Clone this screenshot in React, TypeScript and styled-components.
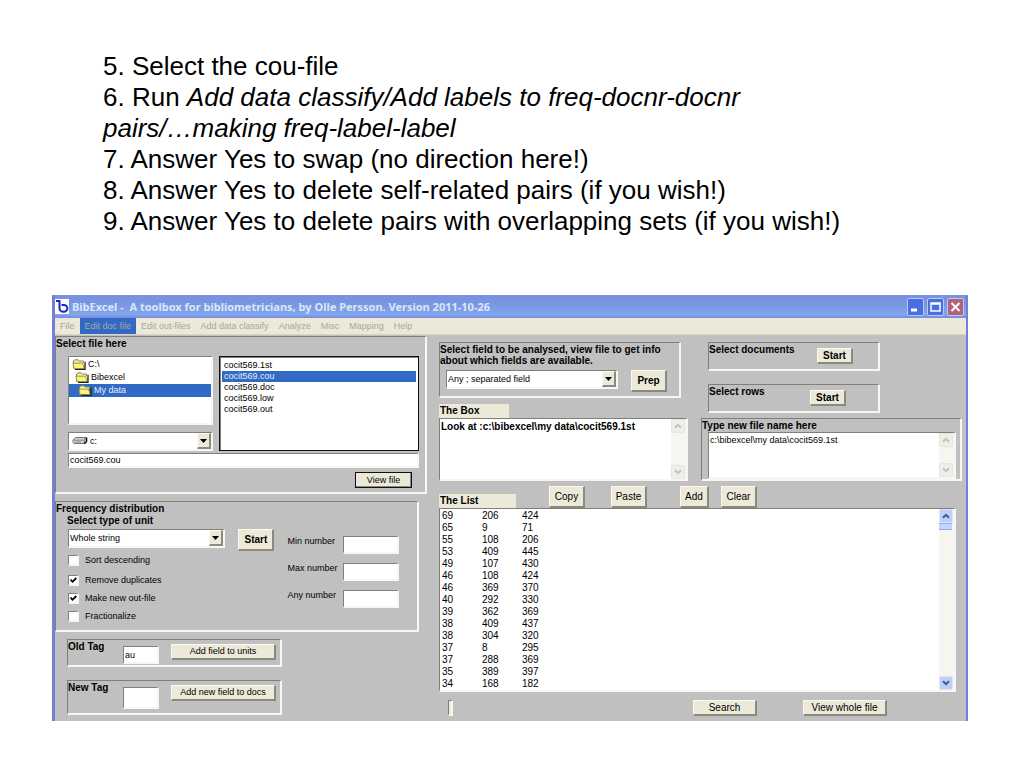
import React from "react";
import styled, { createGlobalStyle, css } from "styled-components";

const Global = createGlobalStyle`
  *, *::before, *::after { box-sizing: border-box; }
  body { margin: 0; background: #fff; color: #000; font-family: "Liberation Sans", Arial, sans-serif; }
  button, input, select, textarea { font: inherit; color: inherit; margin: 0; }
`;

const Slide = styled.main`padding: 51px 56px 47px 52px;`;
const Steps = styled.div`
  padding-left: 51px;
  margin-bottom: 58px;
  font-size: 26px;
  line-height: 31px;
`;
const Step = styled.p`margin: 0;`;

const Window = styled.section`
  border: solid #7480d8;
  border-width: 0 2px 0 3px;
  background: #c0c0c0;
  font-size: 10px;
  line-height: 11px;
`;
const TitleBar = styled.header`
  display: flex;
  align-items: center;
  height: 23px;
  padding: 0 2px 0 0;
  gap: 3px;
  color: #dbe6fb;
  background: linear-gradient(#7a90e0, #7996e0 40%, #82a6ee 85%, #7787dc);
`;
const Title = styled.h1`
  flex: 1;
  margin: 0;
  font: bold 11px/14px "Noto Sans", sans-serif;
  white-space: pre;
`;
const Caption = styled.button<{ $close?: boolean }>`
  display: grid;
  width: 17px;
  height: 18px;
  padding: 0;
  border: 1px solid #b9c9f5;
  border-radius: 2px;
  background: ${p => (p.$close ? "#b5617c" : "#4a6fe0")};
`;
const compact = css`font-size: 9px;`;
const MenuBar = styled.nav`
  ${compact}
  display: flex;
  height: 17px;
  background: #ece9d8;
  border-bottom: 1px solid #d9d6c8;
`;
const MenuItem = styled.button<{ $active?: boolean }>`
  padding: 0 5px;
  border: 0;
  color: #aaa798;
  background: ${p => (p.$active ? "#316ac5" : "transparent")};
`;

const Body = styled.div`
  display: grid;
  grid-template-columns: minmax(0, 372fr) minmax(0, 527fr);
  column-gap: 12px;
`;
const LeftSide = styled.div`padding: 1px 0 6px;`;
const RightSide = styled.div`padding: 7px 0 5px;`;

const sunken = css`
  border: solid;
  border-width: 1px 2px 2px 1px;
  border-color: #817f77 #f6f6f4 #f6f6f4 #817f77;
`;
const raised = css`
  border: solid;
  border-width: 1px 2px 2px 1px;
  border-color: #fbfaf2 #8c8a7c #8c8a7c #fbfaf2;
  background: #ece9d8;
`;
const Panel = styled.fieldset`
  ${sunken}
  min-width: 0;
  margin: 0;
  padding: 1px 0 0;
`;
const Heading = styled.h2`
  margin: 0;
  font-size: 10px;
  line-height: 11px;
  font-weight: bold;
`;
const Button = styled.button<{ $w: number; $tall?: boolean; $bold?: boolean; $focus?: boolean; $compact?: boolean }>`
  ${raised}
  ${p => p.$compact && compact}
  flex: none;
  width: ${p => p.$w}px;
  height: ${p => (p.$tall ? 22 : 16)}px;
  padding: 0;
  white-space: nowrap;
  font-weight: ${p => (p.$bold ? "bold" : "normal")};
  ${p => p.$focus && css`border: 1px solid #111; box-shadow: inset -1px -1px #8c8a7c;`}
`;
const Input = styled.input<{ $h?: number }>`
  ${sunken}
  ${compact}
  width: 100%;
  min-width: 0;
  height: ${p => p.$h ?? 18}px;
  padding: 0 1px;
  background: #fff;
`;

const FilePanel = styled(Panel)`padding-bottom: 4px;`;
const FileGrid = styled.div`
  display: grid;
  grid-template-columns: minmax(0, 145fr) minmax(0, 200fr);
  gap: 2px 6px;
  padding: 7px 6px 0 12px;
`;
const Stack = styled.div<{ $gap?: number }>`
  display: flex;
  flex-direction: column;
  gap: ${p => p.$gap ?? 0}px;
  min-width: 0;
`;
const ListBox = styled.ul<{ $strong?: boolean }>`
  ${sunken}
  ${compact}
  flex: 1;
  min-height: 69px;
  margin: 0;
  padding: ${p => (p.$strong ? "3px 2px" : "1px 0")};
  list-style: none;
  background: #fff;
  ${p => p.$strong && css`border: 1px solid #111; box-shadow: inset 1px 1px #817f77;`}
`;
const Option = styled.li<{ $selected?: boolean; $indent?: number }>`
  display: flex;
  align-items: center;
  gap: 1px;
  height: ${p => (p.$indent === undefined ? 11 : 13)}px;
  padding-left: ${p => p.$indent ?? 2}px;
  color: ${p => (p.$selected ? "#e4ecfa" : "#000")};
  background: ${p => (p.$selected ? "#316ac5" : "transparent")};
`;
const WideCell = styled.div`grid-column: 1 / -1;`;
const FileAction = styled.div`
  display: flex;
  justify-content: flex-end;
  padding: 4px 13px 0 0;
`;

const ComboFrame = styled.div<{ $inset: boolean }>`
  ${sunken}
  ${compact}
  position: relative;
  display: flex;
  align-items: center;
  height: 19px;
  padding-left: ${p => (p.$inset ? 3 : 0)}px;
  background: #fff;
`;
const ComboSelect = styled.select`
  appearance: none;
  flex: 1;
  min-width: 0;
  height: 100%;
  padding: 0 14px 0 1px;
  border: 0;
  background: transparent;
`;
const ComboArrow = styled.span`
  ${raised}
  position: absolute;
  top: 0;
  right: 0;
  bottom: 0;
  width: 14px;
  display: grid;
  place-items: center;
  pointer-events: none;
`;

const FrequencyPanel = styled(Panel)`
  margin: 7px 8px 0 0;
  padding-bottom: 5px;
`;
const FrequencyGrid = styled.div`
  display: grid;
  grid-template-columns: minmax(0, 158fr) 36px minmax(0, 112fr);
  column-gap: 13px;
  padding: 3px 18px 0 12px;
`;
const Subheading = styled(Heading)`padding: 1px 0 0 11px;`;
const Checks = styled.div`
  ${compact}
  display: grid;
  grid-template-rows: 20px 18px 18px 18px;
  padding-top: 3px;
`;
const CheckRow = styled.label`
  display: flex;
  align-items: center;
  gap: 6px;
  height: 18px;
`;
const CheckBox = styled.input`
  ${sunken}
  appearance: none;
  width: 11px;
  height: 11px;
  background: #fff;
`;
const CheckCell = styled.span`
  position: relative;
  display: flex;
`;
const CheckMark = styled.svg`
  position: absolute;
  inset: 1px;
  pointer-events: none;
`;
const Numbers = styled.div`
  ${compact}
  padding-top: 7px;
`;
const NumberRow = styled.label`
  display: grid;
  grid-template-columns: 56px minmax(0, 56px);
  margin-bottom: 9px;
`;

const TagPanel = styled(Panel)<{ $top: number; $h: number }>`
  display: flex;
  align-items: flex-start;
  max-width: 215px;
  min-height: ${p => p.$h}px;
  margin: ${p => p.$top}px 0 0 12px;
`;
const TagLabel = styled.label`
  width: 55px;
  font-weight: bold;
`;
const TagInput = styled.div`
  width: 36px;
  padding-top: 5px;
  margin-right: 12px;
`;
const Lowered = styled.div`padding-top: 3px;`;

const TopArea = styled.div`
  display: grid;
  grid-template-columns: minmax(0, 249fr) minmax(0, 261fr);
  column-gap: 13px;
  padding-right: 4px;
`;
const FieldPanel = styled(Panel)`
  min-height: 56px;
  margin: 0 7px 6px 0;
`;
const FieldRow = styled.div`
  display: grid;
  grid-template-columns: minmax(0, 172px) 36px;
  column-gap: 13px;
  padding: 4px 0 0 6px;
`;
const Tab = styled(Heading)<{ $w: number }>`
  width: ${p => p.$w}px;
  height: 14px;
  padding: 1px 0 0 1px;
  line-height: 12px;
  background: #ece9d8;
`;
const Editor = styled.div<{ $h: number }>`
  ${sunken}
  display: flex;
  height: ${p => p.$h}px;
  background: #fff;
`;
const TextArea = styled.textarea<{ $bold?: boolean }>`
  flex: 1;
  min-width: 0;
  padding: 2px 1px;
  border: 0;
  resize: none;
  background: transparent;
  overflow: hidden;
  font-weight: ${p => (p.$bold ? "bold" : "normal")};
  ${p => !p.$bold && compact}
`;
const SelectPanel = styled(Panel)<{ $gap: number; $end: number }>`
  display: flex;
  align-items: flex-start;
  justify-content: space-between;
  max-width: 172px;
  width: 100%;
  min-height: 29px;
  margin: 0 0 ${p => p.$gap}px 7px;
  padding-right: ${p => p.$end}px;
`;
const SelectAction = styled.div`padding-top: 4px;`;
const NamePanel = styled(Panel)`
  min-height: 63px;
  padding-right: 4px;
`;
const NameEditor = styled.div`padding: 1px 0 0 6px;`;

const Scroll = styled.div`
  display: flex;
  flex-direction: column;
  justify-content: space-between;
  width: 15px;
  background: #f6f5f0;
`;
const ScrollGroup = styled.div`display: block;`;
const ScrollButton = styled.button<{ $on?: boolean }>`
  display: grid;
  place-items: center;
  width: 14px;
  height: 14px;
  padding: 0;
  border: 1px solid ${p => (p.$on ? "#dbe5fc" : "#e6e5de")};
  border-radius: 2px;
  background: ${p => (p.$on ? "#bdd0f8" : "#efeee8")};
`;
const Thumb = styled.div`
  width: 13px;
  height: 7px;
  border: solid #8fb0ee;
  border-width: 1px 0;
  background: #c6d6fb;
`;

const ListTools = styled.div`
  display: flex;
  align-items: flex-end;
  padding-top: 5px;
`;
const ToolSlot = styled.div<{ $before: number }>`
  display: flex;
  margin-left: ${p => p.$before}px;
`;
const ListFrame = styled.div`
  ${sunken}
  display: flex;
  justify-content: space-between;
  margin-right: 10px;
  background: #fff;
`;
const Pairs = styled.table`
  border-collapse: collapse;
  margin-top: 1px;
  line-height: 12px;
  td { width: 40px; padding: 0 0 0 2px; }
`;
const BottomRow = styled.div`
  display: flex;
  justify-content: flex-end;
  gap: 46px;
  padding: 8px 79px 0 9px;
`;
const Progress = styled.div`
  ${sunken}
  width: 5px;
  height: 16px;
  margin-right: auto;
  background: #ece9d8;
`;

const Folder = () => (
  <svg width="15" height="11" viewBox="0 0 15 11" aria-hidden="true">
    <path d="M1.5 9.5V2L3 .8h3L7.4 2h4.1v1.8" fill="#f3ec9a" stroke="#8a8550" />
    <path d="M2.2 9.8 .8 4.2h9.800l1.700 5.600z" fill="#fbf47c" stroke="#8a8440" strokeWidth=".8" />
    <path d="M13 2.8v7.600H3" fill="none" stroke="#222" strokeWidth="1.3" />
  </svg>
);
const Drive = () => (
  <svg width="17" height="10" viewBox="0 0 17 10" aria-hidden="true">
    <path d="M1 4 3.5 1.5H14L12.3 4v3.5H2.2L1 6.5z" fill="#d2d2d2" stroke="#555" strokeWidth=".8" />
    <path d="M12.3 7.7 14.5 5.5v-4" fill="none" stroke="#111" strokeWidth="1.6" />
    <path d="M2 4.2h9.8M3 6h6" stroke="#777" strokeWidth=".8" />
  </svg>
);
const Arrow = () => (
  <svg width="7" height="4" aria-hidden="true"><path d="M0 0h7L3.5 4z" /></svg>
);
const Chevron = ({ down, on }: { down?: boolean; on?: boolean }) => (
  <svg width="8" height="6" viewBox="0 0 8 6" aria-hidden="true">
    <path d={down ? "M1 1.2 4 4.2 7 1.2" : "M1 4.8 4 1.8 7 4.8"} fill="none" stroke={on ? "#41598f" : "#c4c3bb"} strokeWidth="2" />
  </svg>
);

function Combo({ label, value, icon }: { label: string; value: string; icon?: React.ReactNode }) {
  return (
    <ComboFrame $inset={!!icon}>
      {icon}
      <ComboSelect aria-label={label}><option>{value}</option></ComboSelect>
      <ComboArrow><Arrow /></ComboArrow>
    </ComboFrame>
  );
}
function ScrollBar({ on }: { on?: boolean }) {
  return (
    <Scroll>
      <ScrollGroup>
        <ScrollButton $on={on} aria-label="Scroll up"><Chevron on={on} /></ScrollButton>
        {on && <Thumb />}
      </ScrollGroup>
      <ScrollButton $on={on} aria-label="Scroll down"><Chevron down on={on} /></ScrollButton>
    </Scroll>
  );
}
function Check({ text, checked }: { text: string; checked?: boolean }) {
  const [on, setOn] = React.useState(!!checked);
  return (
    <CheckRow>
      <CheckCell>
        <CheckBox type="checkbox" checked={on} onChange={e => setOn(e.target.checked)} />
        {on && <CheckMark width="9" height="9" viewBox="0 0 9 9"><path d="M1.5 3.5 3.5 5.8 7.3 2" fill="none" stroke="#000" strokeWidth="1.8" /></CheckMark>}
      </CheckCell>
      {text}
    </CheckRow>
  );
}

const menus = ["File", "Edit doc file", "Edit out-files", "Add data classify", "Analyze", "Misc", "Mapping", "Help"];
const folders = ["C:\\", "Bibexcel", "My data"];
const files = ["cocit569.1st", "cocit569.cou", "cocit569.doc", "cocit569.low", "cocit569.out"];
const pairs = [
  [69, 206, 424], [65, 9, 71], [55, 108, 206], [53, 409, 445], [49, 107, 430],
  [46, 108, 424], [46, 369, 370], [40, 292, 330], [39, 362, 369], [38, 409, 437],
  [38, 304, 320], [37, 8, 295], [37, 288, 369], [35, 389, 397], [34, 168, 182],
];

export default function App() {
  return (
    <Slide>
      <Global />
      <Steps>
        <Step>5. Select the cou-file</Step>
        <Step>6. Run <em>Add data classify/Add labels to freq-docnr-docnr<br />pairs/…making freq-label-label</em></Step>
        <Step>7. Answer Yes to swap (no direction here!)</Step>
        <Step>8. Answer Yes to delete self-related pairs (if you wish!)</Step>
        <Step>9. Answer Yes to delete pairs with overlapping sets (if you wish!)</Step>
      </Steps>
      <Window>
        <TitleBar>
          <svg width="14" height="15" viewBox="0 0 14 15" aria-hidden="true">
            <path d="M0 0h14v15H0z" fill="#fff" />
            <path d="M1 2h3.5v7.5a3.800 3.200 0 0 0 3.800 3.200h.5a3.600 3.400 0 0 0 0-6.800H6.500" fill="none" stroke="#1828c8" strokeWidth="2" />
          </svg>
          <Title>{"BibExcel -  A toolbox for bibliometricians, by Olle Persson. Version 2011-10-26"}</Title>
          <Caption aria-label="Minimize"><svg width="15" height="16"><path d="M3 11h6" stroke="#fff" strokeWidth="3" /></svg></Caption>
          <Caption aria-label="Maximize"><svg width="15" height="16"><path d="M3 4h9v8H3zM3 5h9" fill="none" stroke="#fff" strokeWidth="1.5" /></svg></Caption>
          <Caption $close aria-label="Close"><svg width="15" height="16"><path d="m3.5 4 8 8m0-8-8 8" stroke="#fff" strokeWidth="2" /></svg></Caption>
        </TitleBar>
        <MenuBar>
          {menus.map((m, i) => <MenuItem key={m} $active={i === 1}>{m}</MenuItem>)}
        </MenuBar>
        <Body>
          <LeftSide>
            <FilePanel>
              <Heading>Select file here</Heading>
              <FileGrid>
                <Stack $gap={7}>
                  <ListBox role="listbox" aria-label="Folders">
                    {folders.map((f, i) => (
                      <Option key={f} role="option" aria-selected={i === 2} $selected={i === 2} $indent={3 + i * 3}><Folder />{f}</Option>
                    ))}
                  </ListBox>
                  <Combo label="Drive" value="c:" icon={<Drive />} />
                </Stack>
                <ListBox $strong role="listbox" aria-label="Files">
                  {files.map((f, i) => (
                    <Option key={f} role="option" aria-selected={i === 1} $selected={i === 1}>{f}</Option>
                  ))}
                </ListBox>
                <WideCell><Input $h={15} aria-label="File name" defaultValue="cocit569.cou" /></WideCell>
              </FileGrid>
              <FileAction><Button $w={57} $focus $compact>View file</Button></FileAction>
            </FilePanel>
            <FrequencyPanel>
              <Heading>Frequency distribution</Heading>
              <Subheading>Select type of unit</Subheading>
              <FrequencyGrid>
                <Stack>
                  <Combo label="Select type of unit" value="Whole string" />
                  <Checks>
                    <Check text="Sort descending" />
                    <Check text="Remove duplicates" checked />
                    <Check text="Make new out-file" checked />
                    <Check text="Fractionalize" />
                  </Checks>
                </Stack>
                <Button $w={36} $tall $bold>Start</Button>
                <Numbers>
                  {["Min number", "Max number", "Any number"].map(n => (
                    <NumberRow key={n}>{n}<Input /></NumberRow>
                  ))}
                </Numbers>
              </FrequencyGrid>
            </FrequencyPanel>
            <TagPanel $top={7} $h={28}>
              <TagLabel htmlFor="old-tag">Old Tag</TagLabel>
              <TagInput><Input id="old-tag" defaultValue="au" /></TagInput>
              <Lowered><Button $w={105} $compact>Add field to units</Button></Lowered>
            </TagPanel>
            <TagPanel $top={13} $h={35}>
              <TagLabel htmlFor="new-tag">New Tag</TagLabel>
              <TagInput><Input id="new-tag" $h={22} /></TagInput>
              <Lowered><Button $w={105} $compact>Add new field to docs</Button></Lowered>
            </TagPanel>
          </LeftSide>
          <RightSide>
            <TopArea>
              <Stack>
                <FieldPanel>
                  <Heading>Select field to be analysed, view file to get info about which fields are available.</Heading>
                  <FieldRow>
                    <Combo label="Field to be analysed" value="Any ; separated field" />
                    <Button $w={36} $tall $bold>Prep</Button>
                  </FieldRow>
                </FieldPanel>
                <Tab $w={70}>The Box</Tab>
                <Editor $h={63}>
                  <TextArea $bold aria-label="The Box" defaultValue={"Look at :c:\\bibexcel\\my data\\cocit569.1st"} />
                  <ScrollBar />
                </Editor>
              </Stack>
              <Stack>
                <SelectPanel $gap={13} $end={25}>
                  <Heading>Select documents</Heading>
                  <SelectAction><Button $w={36} $bold>Start</Button></SelectAction>
                </SelectPanel>
                <SelectPanel $gap={5} $end={32}>
                  <Heading>Select rows</Heading>
                  <SelectAction><Button $w={36} $bold>Start</Button></SelectAction>
                </SelectPanel>
                <NamePanel>
                  <Heading>Type new file name here</Heading>
                  <NameEditor>
                    <Editor $h={47}>
                      <TextArea aria-label="Type new file name here" defaultValue={"c:\\bibexcel\\my data\\cocit569.1st"} />
                      <ScrollBar />
                    </Editor>
                  </NameEditor>
                </NamePanel>
              </Stack>
            </TopArea>
            <ListTools>
              <Tab $w={77}>The List</Tab>
              <ToolSlot $before={33}><Button $w={36} $tall>Copy</Button></ToolSlot>
              <ToolSlot $before={26}><Button $w={36} $tall>Paste</Button></ToolSlot>
              <ToolSlot $before={33}><Button $w={29} $tall>Add</Button></ToolSlot>
              <ToolSlot $before={12}><Button $w={36} $tall>Clear</Button></ToolSlot>
            </ListTools>
            <ListFrame>
              <Pairs>
                <tbody>
                  {pairs.map((r, i) => <tr key={i}>{r.map((v, j) => <td key={j}>{v}</td>)}</tr>)}
                </tbody>
              </Pairs>
              <ScrollBar on />
            </ListFrame>
            <BottomRow>
              <Progress />
              <Button $w={64}>Search</Button>
              <Button $w={84}>View whole file</Button>
            </BottomRow>
          </RightSide>
        </Body>
      </Window>
    </Slide>
  );
}
